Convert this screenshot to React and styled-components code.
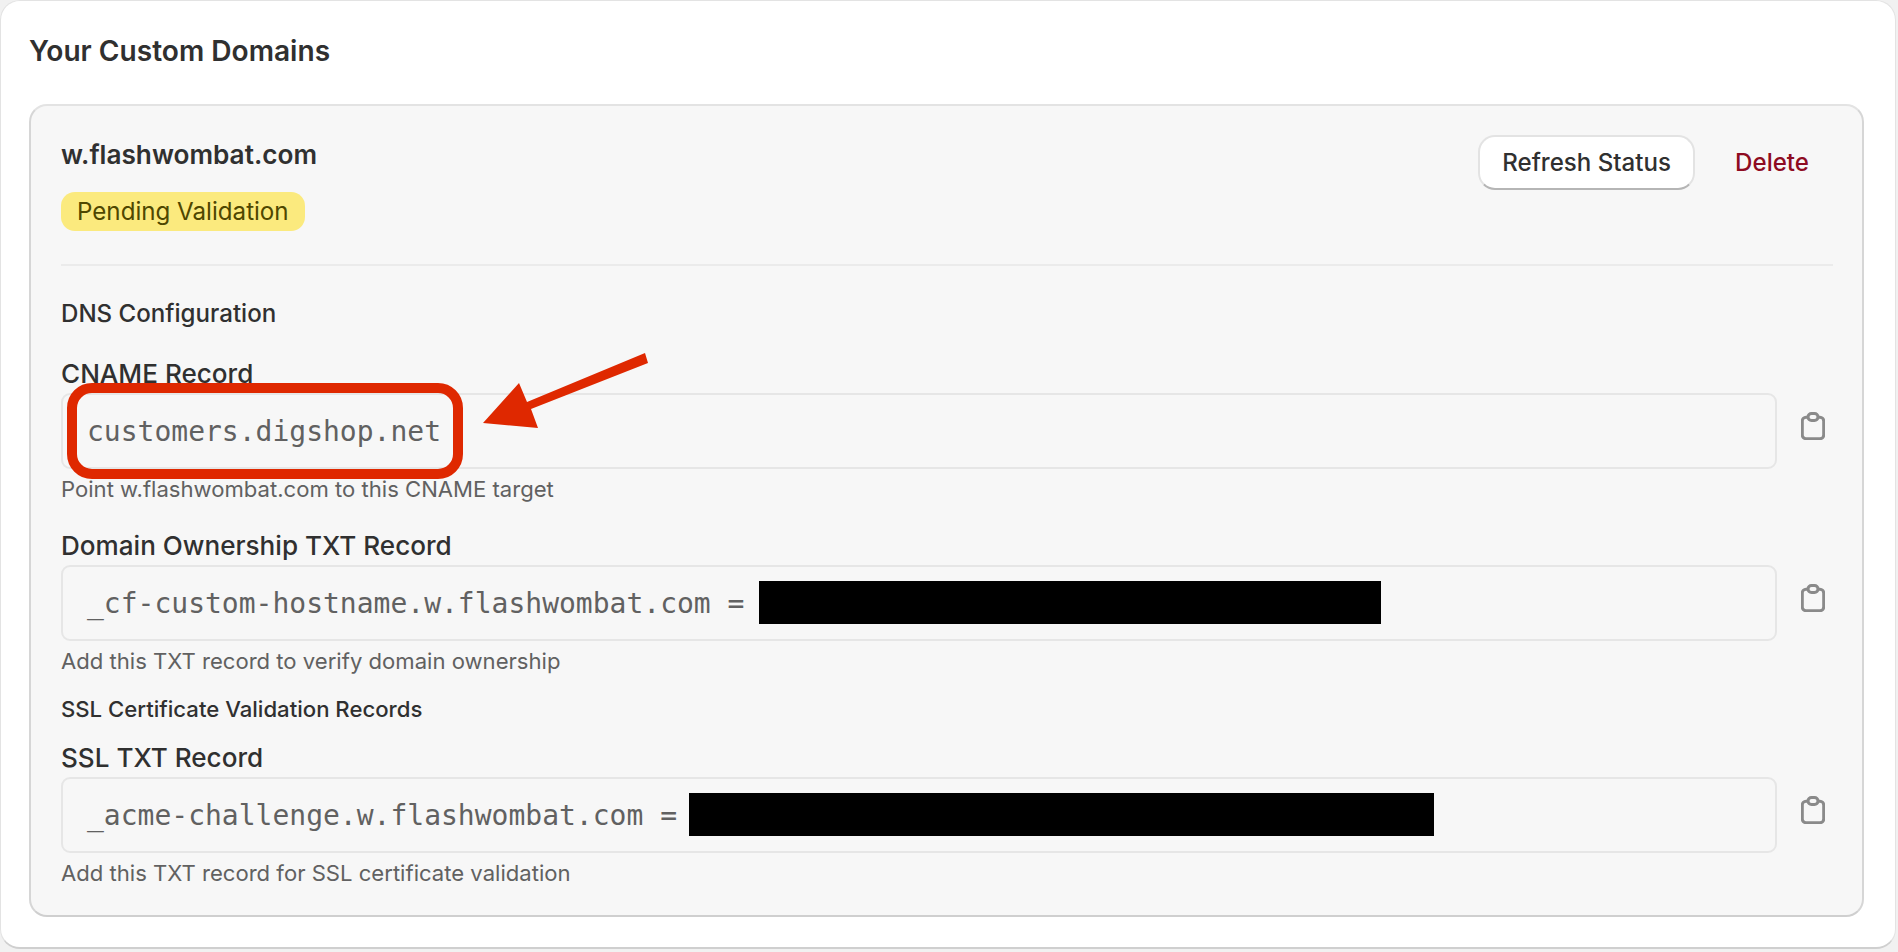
import React from "react";
import styled, { createGlobalStyle } from "styled-components";

const Global = createGlobalStyle`
  html, body { margin: 0; padding: 0; background: #f1f1f1; }
  body { font-family: Inter, "Noto Sans", sans-serif; color: #303030; }
  * { box-sizing: border-box; }
`;

const Page = styled.div`
  position: relative;
  width: 1896px;
  height: 949px;
  background: #fff;
  border: 1px solid #e3e3e3;
  border-bottom: 2px solid #cfcfcf;
  border-radius: 20px;
  padding: 33px 31px 0 28px;
`;

const Title = styled.h2`
  margin: 0 0 36px;
  font-size: 28.1px;
  line-height: 34px;
  font-weight: 600;
  color: #303030;
`;

const DomainCard = styled.section`
  background: #f7f7f7;
  border: 2px solid #e3e3e3;
  border-bottom-color: #cfcfcf;
  border-right-color: #d6d6d6;
  border-left-color: #d6d6d6;
  border-radius: 18px;
  height: 813px;
  padding: 29px 29px 0 30px;
`;

const CardHead = styled.header`
  display: flex;
  justify-content: space-between;
  align-items: flex-start;
  padding-bottom: 33px;
  border-bottom: 2px solid #ebebeb;
`;

const HeadInfo = styled.div`
  display: flex;
  flex-direction: column;
  align-items: flex-start;
  gap: 17px;
`;

const DomainName = styled.h3`
  margin: 0;
  font-size: 26.2px;
  line-height: 40px;
  font-weight: 600;
`;

const Badge = styled.span`
  display: inline-flex;
  align-items: center;
  height: 39px;
  padding: 0 16px;
  background: #fbea7e;
  color: #4f4700;
  border-radius: 14px;
  font-size: 24.15px;
  font-weight: 400;
`;

const Actions = styled.div`
  display: flex;
  align-items: center;
  gap: 40px;
  padding-right: 24px;
`;

const RefreshButton = styled.button`
  width: 217px;
  height: 55px;
  background: #fff;
  border: 2px solid #e3e3e3;
  border-bottom-color: #b5b5b5;
  border-radius: 17px;
  font: 500 24.1px Inter, sans-serif;
  color: #303030;
  padding: 0;
`;

const DeleteButton = styled.button`
  background: none;
  border: 0;
  padding: 0;
  font: 500 24.1px Inter, sans-serif;
  color: #8e0b21;
`;

const SectionTitle = styled.h4`
  margin: ${(p) => p.$top}px 0 0;
  font-size: ${(p) => p.$size}px;
  line-height: 30px;
  font-weight: 550;
`;

const RecordBlock = styled.div`
  margin-top: ${(p) => p.$top}px;
`;

const RecordLabel = styled.div`
  font-size: 26.1px;
  line-height: 30px;
  font-weight: 550;
  margin-bottom: 4px;
`;

const RecordRow = styled.div`
  display: flex;
  align-items: flex-start;
  gap: 24px;
  padding-right: 8px;
`;

const Field = styled.div`
  flex: 1;
  height: 76px;
  display: flex;
  align-items: center;
  padding-left: 24px;
  border: 2px solid #e6e6e6;
  border-radius: 9px;
  background: #f7f7f7;
  font-family: "DejaVu Sans Mono", "Liberation Mono", monospace;
  font-size: 28px;
  color: #616161;
  white-space: pre;
`;

const Redacted = styled.span`
  display: inline-block;
  width: ${(p) => p.$w}px;
  height: 43px;
  margin-left: ${(p) => p.$ml}px;
  margin-bottom: 2px;
  background: #000;
`;

const CopyButton = styled.button`
  display: block;
  width: 24px;
  height: 28px;
  margin-top: 19px;
  padding: 0;
  border: 0;
  background: none;
  color: #8a8a8a;
`;

const Help = styled.p`
  margin: 8px 0 0;
  font-size: 22.1px;
  line-height: 25px;
  color: #616161;
`;

const Highlight = styled.div`
  position: absolute;
  left: 66px;
  top: 382px;
  width: 396px;
  height: 96px;
  border: 10px solid #df2800;
  border-radius: 25px;
  pointer-events: none;
`;

const Arrow = styled.svg`
  position: absolute;
  left: 479px;
  top: 349px;
  width: 172px;
  height: 82px;
  pointer-events: none;
`;

const ClipboardIcon = () => (
  <svg width="24" height="28" viewBox="0 0 24 28" fill="none" stroke="currentColor" strokeWidth="3">
    <path d="M7 5.2H5a3.7 3.7 0 0 0-3.7 3.7V23a3.7 3.7 0 0 0 3.7 3.7h14a3.7 3.7 0 0 0 3.7-3.7V8.9A3.7 3.7 0 0 0 19 5.2h-2" />
    <rect x="7" y="1.5" width="10" height="7" rx="3.5" />
  </svg>
);

const Record = ({ top, label, help, children }) => (
  <RecordBlock $top={top}>
    <RecordLabel>{label}</RecordLabel>
    <RecordRow>
      <Field>{children}</Field>
      <CopyButton aria-label="Copy"><ClipboardIcon /></CopyButton>
    </RecordRow>
    <Help>{help}</Help>
  </RecordBlock>
);

export default function App() {
  return (
    <Page>
      <Global />
      <Title>Your Custom Domains</Title>
      <DomainCard>
        <CardHead>
          <HeadInfo>
            <DomainName>w.flashwombat.com</DomainName>
            <Badge>Pending Validation</Badge>
          </HeadInfo>
          <Actions>
            <RefreshButton>Refresh Status</RefreshButton>
            <DeleteButton>Delete</DeleteButton>
          </Actions>
        </CardHead>
        <SectionTitle $top={33} $size={24.1}>DNS Configuration</SectionTitle>
        <Record top={30} label="CNAME Record" help="Point w.flashwombat.com to this CNAME target">
          customers.digshop.net
        </Record>
        <Record top={29} label="Domain Ownership TXT Record" help="Add this TXT record to verify domain ownership">
          {"_cf-custom-hostname.w.flashwombat.com = "}<Redacted $w={622} $ml={-2} />
        </Record>
        <SectionTitle $top={20} $size={22.15}>SSL Certificate Validation Records</SectionTitle>
        <Record top={19} label="SSL TXT Record" help="Add this TXT record for SSL certificate validation">
          {"_acme-challenge.w.flashwombat.com = "}<Redacted $w={745} $ml={-5} />
        </Record>
      </DomainCard>
      <Highlight />
      <Arrow viewBox="480 350 172 82">
        <polygon fill="#df2800" points="483,423 519,383 527,402 645,353 648,363 531,409 538,428" />
      </Arrow>
    </Page>
  );
}
